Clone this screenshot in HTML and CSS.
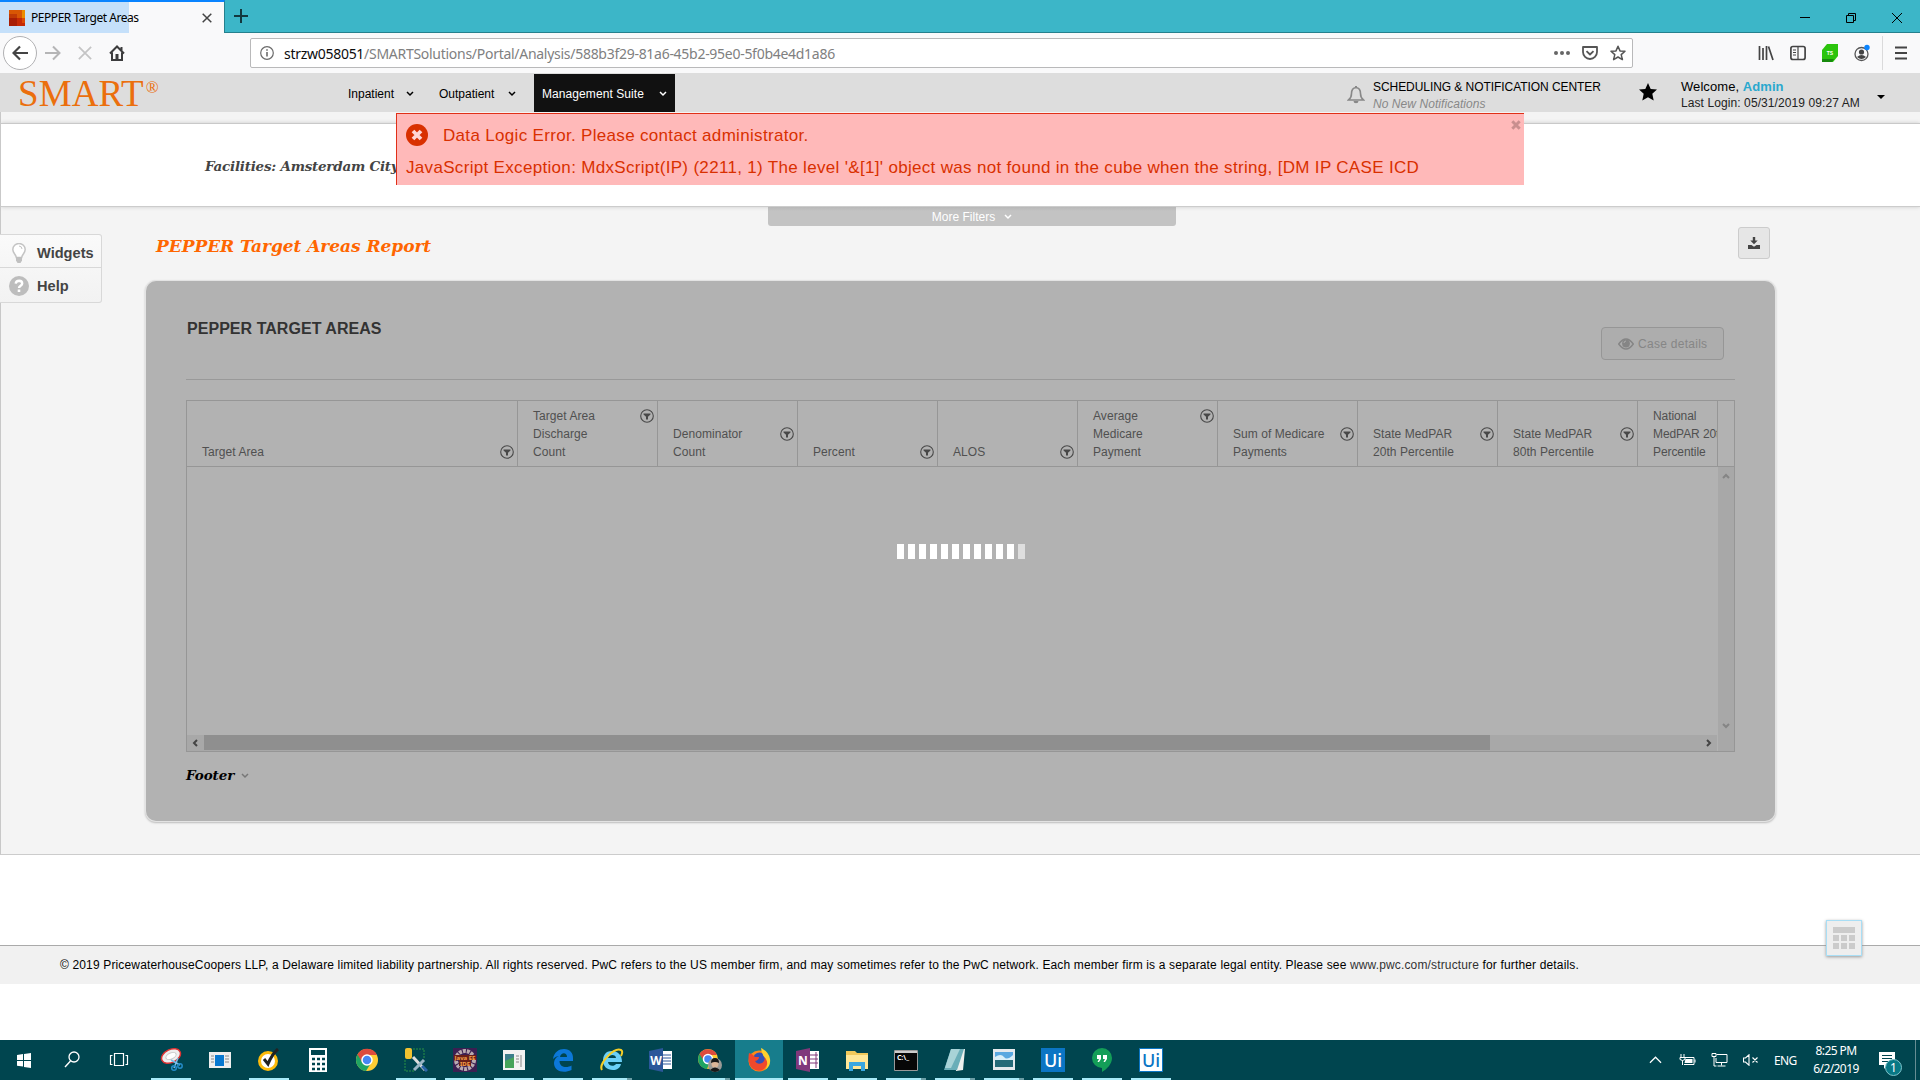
FILE: index.html
```html
<!DOCTYPE html>
<html lang="en">
<head>
<meta charset="utf-8">
<title>PEPPER Target Areas</title>
<link rel="stylesheet" href="styles.css">
</head>
<body>
<svg class="defs" width="0" height="0">
  <symbol id="chev" viewBox="0 0 8 6"><path d="M1 1l3 3 3-3" fill="none" stroke="currentColor" stroke-width="1.5"/></symbol>
  <symbol id="filter" viewBox="0 0 14 14"><circle cx="7" cy="7" r="6.3" fill="none" stroke="currentColor" stroke-width="1.1"/><path d="M3.500 4.500h7v1L8 7.800V10.500H6V7.800L3.500 5.500z" fill="currentColor"/></symbol>
  <symbol id="arrow" viewBox="0 0 8 8"><path d="M1 6l3-3 3 3" fill="none" stroke="currentColor" stroke-width="2"/></symbol>
</svg>

<div class="tabbar">
  <div class="tab">
    <svg class="favicon" viewBox="0 0 16 16"><path fill="#d85604" d="M0 0h16v16H0z"/><path fill="#eb8c00" d="M13 0h3v8h-3z"/><path fill="#c03a05" d="M0 4h8v4H0z"/><path fill="#a81e05" d="M0 8h8v8H0z"/><path fill="#c52a05" d="M8 8h8v8H8z"/><path fill="#dc4a05" d="M13 8h3v5h-3z"/></svg>
    <span class="tab-title">PEPPER Target Areas</span>
    <svg class="tab-close" viewBox="0 0 10 10"><path d="M.7.700l8.600 8.600M9.300.700L.7 9.300" stroke="#444" stroke-width="1.500"/></svg>
  </div>
  <svg class="newtab" viewBox="0 0 14 14"><path d="M7 0v14M0 7h14" stroke="#13383e" stroke-width="2"/></svg>
  <div class="winctl">
    <svg viewBox="0 0 12 12"><path d="M1 5.500h10" stroke="#000"/></svg>
    <svg viewBox="0 0 12 12"><path d="M1.500 3.500h7v7h-7zM3.500 3V1.500h7v7H9" fill="none" stroke="#000"/></svg>
    <svg viewBox="0 0 12 12"><path d="M1 1l10 10M11 1L1 11" stroke="#000"/></svg>
  </div>
</div>

<div class="toolbar">
  <div class="back"><svg viewBox="0 0 16 16"><path d="M16 8H2M8 1.500L1.500 8 8 14.500" fill="none" stroke="#444" stroke-width="2.200"/></svg></div>
  <svg class="tb fwd" viewBox="0 0 16 16"><path d="M0 8h14M8 1.500L14.500 8 8 14.500" fill="none" stroke="#b5b5b6" stroke-width="2"/></svg>
  <svg class="tb stop" viewBox="0 0 16 16"><path d="M1 1l14 14M15 1L1 15" stroke="#c4c4c5" stroke-width="2"/></svg>
  <svg class="tb home" viewBox="0 0 16 16"><path d="M1 8.500L8 1.500l7 7M3 7.500V15h10V7.500M12.500 2v4" fill="none" stroke="#3c3c3d" stroke-width="2"/><path d="M6.500 9h3v6h-3z" fill="#3c3c3d"/></svg>
  <div class="urlbar">
    <svg class="info" viewBox="0 0 14 14"><circle cx="7" cy="7" r="6.300" fill="none" stroke="#6b6b6b" stroke-width="1.200"/><path d="M6.200 6h1.600v4.500H6.200zM6.200 3.200h1.600v1.600H6.200z" fill="#6b6b6b"/></svg>
    <span class="url"><b>strzw058051</b>/SMARTSolutions/Portal/Analysis/588b3f29-81a6-45b2-95e0-5f0b4e4d1a86</span>
    <svg class="dots" viewBox="0 0 16 16"><g fill="#666"><circle cx="2" cy="8" r="2"/><circle cx="8" cy="8" r="2"/><circle cx="14" cy="8" r="2"/></g></svg>
    <svg class="pocket" viewBox="0 0 16 16"><path d="M1 2h14v5a7 7 0 0 1-14 0zM4.500 6.200L8 9.500l3.500-3.300" fill="none" stroke="#555" stroke-width="1.800" stroke-linejoin="round"/></svg>
    <svg class="bookmark" viewBox="0 0 16 16"><path d="M8 1.200l2 4.700 5 .4-3.800 3.300 1.200 5L8 12l-4.400 2.600 1.200-5L1 6.300l5-.4z" fill="none" stroke="#555" stroke-width="1.500" stroke-linejoin="round"/></svg>
  </div>
  <svg class="tb lib" viewBox="0 0 16 16"><path d="M1.500 1v14M5 3v12M8.500 1v14M10.500 1.500L15 15" stroke="#444" stroke-width="1.700"/></svg>
  <svg class="tb side" viewBox="0 0 16 16"><rect x=".9" y="1.500" width="14.200" height="13" rx="2" fill="none" stroke="#444" stroke-width="1.700"/><path d="M8 2v12M3 5h3M3 7.500h3M3 10h3" stroke="#444" stroke-width="1.200"/></svg>
  <svg class="tb ts" viewBox="0 0 16 18"><path d="M5 0h11v12l-5 6H0V6z" fill="#2bc40c"/><path d="M0 15h12l-2 3H0z" fill="#178a0d"/><text x="8" y="11" text-anchor="middle" class="ts-text">TS</text></svg>
  <svg class="tb acct" viewBox="0 0 16 18"><circle cx="7.500" cy="10" r="6.500" fill="none" stroke="#555" stroke-width="1.300"/><circle cx="7.500" cy="8" r="2.600" fill="#444"/><path d="M3 13q4.500-4 9 0-4.500 4-9 0z" fill="#444"/><circle cx="13" cy="3.500" r="2.700" fill="#0a84ff"/></svg>
  <i class="tb-sep"></i>
  <svg class="burger" viewBox="0 0 12 14"><path d="M0 1.500h12M0 7h12M0 12.500h12" stroke="#444" stroke-width="2"/></svg>
</div>

<header class="app-header">
  <div class="logo">SMART<sup>®</sup></div>
  <nav class="menu">
    <a><span>Inpatient</span><svg><use href="#chev"/></svg></a>
    <a><span>Outpatient</span><svg><use href="#chev"/></svg></a>
    <a class="on"><span>Management Suite</span><svg><use href="#chev"/></svg></a>
  </nav>
  <svg class="bell" viewBox="0 0 18 18"><path d="M9 1.500c-3.500.5-4.500 3-4.500 6 0 3-1 5-3 6.500h15c-2-1.500-3-3.500-3-6.500 0-3-1-5.500-4.500-6z" fill="none" stroke="#888" stroke-width="1.600"/><path d="M6.500 15h5a2.500 2.200 0 0 1-5 0zM8 0h2v2H8z" fill="#888"/></svg>
  <div class="notif"><div class="notif-t">SCHEDULING &amp; NOTIFICATION CENTER</div><div class="notif-s">No New Notifications</div></div>
  <svg class="star" viewBox="0 0 18 18"><path d="M9 0l2.700 5.900 6.300.6-4.700 4.300L14.700 17.500 9 14.200l-5.700 3.300 1.400-6.700L0 6.500l6.300-.6z" fill="#000"/></svg>
  <div class="user"><div class="welcome">Welcome, <b>Admin</b></div><div class="login">Last Login: 05/31/2019 09:27 AM</div></div>
  <i class="caret"></i>
</header>

<main class="page">
  <section class="filters">
    <span class="facilities">Facilities: Amsterdam City</span>
  </section>
  <div class="more"><span>More Filters</span><svg><use href="#chev"/></svg></div>
  <div class="titlebar">
    <h1>PEPPER Target Areas Report</h1>
    <div class="download"><svg viewBox="0 0 12 12"><path d="M4.800 0h2.400v3.500h2.500L6 7.200 2.300 3.500h2.500zM0 8h3.500L6 9.800 8.500 8H12v4H0z" fill="#444"/></svg></div>
  </div>
  <section class="panel">
    <div class="panel-head">
      <h2>PEPPER TARGET AREAS</h2>
      <div class="details"><svg viewBox="0 0 16 12"><path d="M.7 6Q8-4 15.300 6 8 16 .7 6z" fill="none" stroke="#858585" stroke-width="1.400"/><circle cx="8" cy="5.500" r="3.900" fill="#858585"/><path d="M6 5q0-1.800 2-2" stroke="#b0b0b0" fill="none" stroke-width=".9"/></svg><span>Case details</span></div>
    </div>
    <div class="grid">
      <div class="thead">
        <div class="th wide"><span>Target Area</span><svg><use href="#filter"/></svg></div>
        <div class="th"><span>Target Area<br>Discharge<br>Count</span><svg><use href="#filter"/></svg></div>
        <div class="th"><span>Denominator<br>Count</span><svg><use href="#filter"/></svg></div>
        <div class="th"><span>Percent</span><svg><use href="#filter"/></svg></div>
        <div class="th"><span>ALOS</span><svg><use href="#filter"/></svg></div>
        <div class="th"><span>Average<br>Medicare<br>Payment</span><svg><use href="#filter"/></svg></div>
        <div class="th"><span>Sum of Medicare<br>Payments</span><svg><use href="#filter"/></svg></div>
        <div class="th"><span>State MedPAR<br>20th Percentile</span><svg><use href="#filter"/></svg></div>
        <div class="th"><span>State MedPAR<br>80th Percentile</span><svg><use href="#filter"/></svg></div>
        <div class="th cut"><span>National<br>MedPAR 20th<br>Percentile</span></div>
      </div>
      <div class="tbody">
        <div class="rows">
          <div class="loader"><i></i><i></i><i></i><i></i><i></i><i></i><i></i><i></i><i></i><i></i><i></i><i></i></div>
          <div class="hscroll"><svg class="left"><use href="#arrow"/></svg><div class="track"><div class="thumb"></div></div><svg class="right"><use href="#arrow"/></svg></div>
        </div>
        <div class="vscroll"><svg><use href="#arrow"/></svg><svg class="down"><use href="#arrow"/></svg></div>
      </div>
    </div>
    <div class="footnote"><span>Footer</span><svg><use href="#chev"/></svg></div>
  </section>

  <aside class="sidetabs">
    <div><svg viewBox="0 0 20 20"><path d="M7.300 14.500C7 11.500 3.800 10 3.800 6.500a6.200 6 0 0 1 12.400 0c0 3.500-3.200 5-3.500 8z" fill="#fff" stroke="#c4c4c4" stroke-width="1.500"/><path d="M7 14h6v3.500L11.500 20h-3L7 17.500z" fill="#c0c0c0"/><path d="M10 3q3 .3 3 3" fill="none" stroke="#c4c4c4"/></svg><span>Widgets</span></div>
    <div><svg viewBox="0 0 20 20"><circle cx="10" cy="10" r="10" fill="#bdbdbd"/><path d="M6.700 7.600Q7 4.800 10.200 4.800q3 .2 3 2.700c0 2.300-3.200 2-3.200 4.500" fill="none" stroke="#fff" stroke-width="2.400"/><path d="M8.700 13.500h2.600V16H8.700z" fill="#fff"/></svg><span>Help</span></div>
  </aside>
  <div class="error">
    <svg class="err-icon" viewBox="0 0 22 22"><circle cx="11" cy="11" r="11" fill="#d93000"/><path d="M7 7l8 8M15 7l-8 8" stroke="#ffd6d4" stroke-width="3.800"/></svg>
    <span class="err-title">Data Logic Error. Please contact administrator.</span>
    <svg class="err-close" viewBox="0 0 10 10"><path d="M1.300 1.300l7.400 7.400M8.700 1.300L1.300 8.700" stroke="#c98f8f" stroke-width="3"/></svg>
    <p>JavaScript Exception: MdxScript(IP) (2211, 1) The level '&amp;[1]' object was not found in the cube when the string, [DM IP CASE ICD</p>
  </div>
</main>

<footer class="legal">
  <span>© 2019 PricewaterhouseCoopers LLP, a Delaware limited liability partnership. All rights reserved. PwC refers to the US member firm, and may sometimes refer to the PwC network. Each member firm is a separate legal entity. Please see <a>www.pwc.com/structure</a> for further details.</span>
  <div class="calc"><svg viewBox="0 0 22 22"><path fill="#cbcbcb" d="M0 0h22v6H0zM0 8h6v6H0zM8 8h6v6H8zM16 8h6v6h-6zM0 16h6v6H0zM8 16h6v6H8zM16 16h6v6h-6z"/></svg></div>
</footer>

<div class="taskbar">
  <div class="apps">
    <div class="app sys"><svg viewBox="0 0 20 20"><path fill="#fff" d="M3 5l6-1v6H3zM10 3.900L17 3v7h-7zM3 11h6v5.600l-6-.8zM10 11h7v7l-7-1z"/></svg></div>
    <div class="app sys"><svg viewBox="0 0 20 20"><circle cx="12" cy="7" r="5" fill="none" stroke="#fff" stroke-width="1.300"/><path d="M8.500 11L3 17" stroke="#fff" stroke-width="1.400"/></svg></div>
    <div class="app sys"><svg viewBox="0 0 20 20"><path d="M5.500 3.500h9v12h-9zM3.500 5.500h-2v9h2M16.500 5.500h2v9h-2" fill="none" stroke="#fff" stroke-width="1.200"/></svg></div>
    <div class="app run"><svg viewBox="0 0 24 24"><ellipse cx="12" cy="8" rx="10" ry="6.500" transform="rotate(-25 12 8)" fill="#eee" stroke="#d33" stroke-width="1.500"/><ellipse cx="12" cy="8" rx="5.500" ry="3" transform="rotate(-25 12 8)" fill="#fff" stroke="#c9c9c9"/><path d="M12 12l9 5M19 10l-4 10" stroke="#79bce8" stroke-width="1.500"/><circle cx="15" cy="20" r="2.300" fill="none" stroke="#238cc8" stroke-width="1.500"/><circle cx="21" cy="18" r="2.200" fill="none" stroke="#238cc8" stroke-width="1.500"/></svg></div>
    <div class="app"><svg viewBox="0 0 24 24"><path fill="#eee" d="M1 4h22v16H1z"/><path fill="#0878d0" d="M7 7h9v11H7z"/><path d="M3 8h3M3 11h3M3 14h3M17 8h4M17 11h4M17 14h4" stroke="#888"/></svg></div>
    <div class="app run"><svg viewBox="0 0 24 24"><circle cx="11" cy="13" r="8.500" fill="#fff" stroke="#fdbb0b" stroke-width="3"/><path d="M7 11l4 5Q15 6 21 1" fill="none" stroke="#222" stroke-width="3"/></svg></div>
    <div class="app"><svg viewBox="0 0 24 24"><path fill="#fff" d="M3 0h18v24H3z"/><path fill="#00454f" d="M5 2h14v5H5z"/><path d="M6 11h13M6 16h13M6 21h13" stroke="#00454f" stroke-width="2.500" stroke-dasharray="3 2"/></svg></div>
    <div class="app"><svg viewBox="0 0 24 24"><circle cx="12" cy="12" r="11" fill="#fc3"/><path d="M12 12L2.500 6.500A11 11 0 0 0 11 23l5-8z" fill="#1fa463"/><path d="M2.500 6.500A11 11 0 0 1 22 7H12L7 14z" fill="#dd4b3e"/><circle cx="12" cy="12" r="5" fill="#4687f4" stroke="#fff" stroke-width="1.500"/></svg></div>
    <div class="app run"><svg viewBox="0 0 24 24"><path d="M9 1h11v10M1 12v11h10" fill="none" stroke="#299344" stroke-dasharray="2 1"/><rect x="1" y="0" width="7" height="11" rx="2" fill="#f2c230"/><path d="M9 9l12 13" stroke="#ddd" stroke-width="3"/><path d="M10 22l10-10" stroke="#9bb6c6" stroke-width="3"/><path d="M18 18l5 5" stroke="#2a66a8" stroke-width="3"/></svg></div>
    <div class="app run"><svg viewBox="0 0 24 24"><path fill="#3b1f52" d="M0 0h24v24H0z"/><circle cx="12" cy="12" r="9" fill="none" stroke="#b9aab0" stroke-width="4" stroke-dasharray="3 1"/><path fill="#6b2018" d="M1 7h22v5H1zM6 12h12v6H6z"/><text x="12" y="11.500" class="jee">Java EE</text><text x="12" y="17.500" class="jee">IDE</text></svg></div>
    <div class="app run"><svg viewBox="0 0 24 24"><path fill="#f2f2f2" d="M1 2h22v20H1z"/><path fill="#3d7f8c" d="M3 6h9v14H3z"/><path fill="#46a35a" d="M3 13l9-4v11H3z"/><path d="M14 8h3M14 11h3M14 14h3M19 7v12" stroke="#888"/></svg></div>
    <div class="app run"><svg viewBox="0 0 24 24"><path d="M2 11C3 4 8 1 13 1c6 0 9 4 9 9v3H8.500c0 7 8 7 12 4.500v4.500C12 26 3 23 3 15c0-3 2-6 5-7-2 0-4 1-6 3zm7-2h7c0-5-6-5-7 0z" fill="#0c78d8"/></svg></div>
    <div class="app run multi"><svg viewBox="0 0 24 24"><path d="M12 3C5 3 3 8 3 13s4 9 10 9c4 0 7-2 8-6h-5c-2 3-8 2-8-2h14C22 7 18 3 12 3zM8 10c1-4 8-4 8 0z" fill="#6bd0f7"/><path d="M2 22C-2 16 14-1 21 2c2 1 1 4 0 6" fill="none" stroke="#f5ce27" stroke-width="2"/></svg></div>
    <div class="app"><svg viewBox="0 0 24 24"><path fill="#fff" d="M12 3h11v18H12z"/><path d="M14 7h8M14 10h8M14 13h8M14 16h8" stroke="#2b579a"/><path fill="#2b579a" d="M0 3l14-3v24L0 21z"/><text x="7" y="16.500" class="glyph">W</text></svg></div>
    <div class="app run multi"><svg viewBox="0 0 24 24"><circle cx="10" cy="11" r="10" fill="#fc3"/><path d="M1.500 6A10 10 0 0 0 9 21l3-8z" fill="#1fa463"/><path d="M1.500 6A10 10 0 0 1 19 7h-9l-4 6z" fill="#dd4b3e"/><circle cx="10" cy="11" r="4.500" fill="#4687f4" stroke="#fff" stroke-width="1.500"/><circle cx="17" cy="17" r="7" fill="#9a9a96"/><circle cx="17" cy="16" r="3.500" fill="#dcb698"/><path d="M13 15q0-5 4-5t4 5q-4-2-8 0zM12 22q5-5 10 0-5 4-10 0z" fill="#181818"/></svg></div>
    <div class="app run active"><svg viewBox="0 0 24 24"><circle cx="12" cy="13" r="10.500" fill="#ff8a16"/><circle cx="12.500" cy="11" r="6.500" fill="#3450b5"/><path d="M2 5q4 1 6 4h4q0 3-4 4 2 4 7 2 4-2 2-7 6 6 1 12-5 5-12 1-6-5-4-16z" fill="#f0492c"/><path d="M14 0q8 4 9 11t-5 11q4-6 1-11-5-5-5-11z" fill="#ffcf2e"/></svg></div>
    <div class="app run"><svg viewBox="0 0 24 24"><path fill="#fff" d="M12 3h11v18H12z"/><path d="M14 7h8M14 11h8M14 15h8M20 4v16" stroke="#80397b"/><path fill="#80397b" d="M0 3l14-3v24L0 21z"/><text x="7" y="16.500" class="glyph">N</text></svg></div>
    <div class="app run"><svg viewBox="0 0 24 24"><path fill="#f1c95b" d="M1 3h9l2 2h11v16H1z"/><path fill="#ffe797" d="M1 7h22v14H1z"/><path fill="#39a7e0" d="M4 14h16v9h-4v-5H8v5H4z"/></svg></div>
    <div class="app run multi"><svg viewBox="0 0 24 24"><path fill="#070707" stroke="#999" d="M.5 2.500h23v20H.5z"/><path fill="#ccc" d="M1 3h22v2H1z"/><text x="9" y="12" class="cmd">C:\_</text></svg></div>
    <div class="app run multi"><svg viewBox="0 0 24 24"><path fill="#edf0ee" d="M10 1h12l-2 21-7 1z"/><path fill="#6aaeb8" d="M8 1h13l-7 21H1z"/><path fill="#a8d3d7" d="M8 1h9L8 20H2z"/></svg></div>
    <div class="app run multi"><svg viewBox="0 0 24 24"><path fill="#e4e9ed" d="M1 1h22v21H1z"/><path fill="#5aa8e0" d="M3 4h18v7H3z"/><path fill="#d9eff8" d="M3 9q6-4 9 0t9-2v5H3z"/><path fill="#256a78" d="M3 12h18v7H3z"/></svg></div>
    <div class="app run"><svg viewBox="0 0 24 24"><path fill="#0b75c4" d="M0 0h24v24H0z"/><text x="12" y="18.500" class="ui">Ui</text></svg></div>
    <div class="app run"><svg viewBox="0 0 24 24"><path d="M12 0a10 10 0 0 1 10 10c0 6-5 11-10 14v-4A10 10 0 0 1 12 0z" fill="#149e58"/><path fill="#fff" d="M7 7h4v4l-2 3H7.500L9 11H7zM13 7h4v4l-2 3h-1.500l1.500-3h-2z"/></svg></div>
    <div class="app run"><svg viewBox="0 0 24 24"><path fill="#fff" stroke="#0b75c4" d="M.5.500h23v23H.5z"/><text x="12" y="18.500" class="ui inv">Ui</text></svg></div>
  </div>
  <div class="tray">
    <svg class="t-up" viewBox="0 0 14 8"><path d="M1 7l6-6 6 6" fill="none" stroke="#fff" stroke-width="1.300"/></svg>
    <svg class="t-bat" viewBox="0 0 16 12"><path d="M5.500 3.500h9v7h-10M15.500 5.500v3M1.500 0v3M4.500 0v3M.5 3.500h5v2q-2.500 2-5 0zM3 6.500V11" fill="none" stroke="#fff"/><path fill="#fff" d="M6 5h7v4H5z"/></svg>
    <svg class="t-net" viewBox="0 0 16 14"><path d="M5 1.500h10.500v8H4.500V5M10 9.500v3M6 13h8M.5.500h4v3h-4zM2.500 4v9H5" fill="none" stroke="#fff"/></svg>
    <svg class="t-vol" viewBox="0 0 16 12"><path d="M.5 4h2L6 .8v10.400L2.500 8h-2zM9.500 3.500l5 5M14.500 3.500l-5 5" fill="none" stroke="#fff" stroke-width="1.100"/></svg>
    <span class="lang">ENG</span>
    <div class="clock"><div>8:25 PM</div><div>6/2/2019</div></div>
    <div class="action"><svg viewBox="0 0 18 17"><path fill="#fff" d="M1 0h16v13H9l-3 4v-4H1z"/><path d="M4 3.500h10M4 6.500h10M4 9.500h7" stroke="#00454f"/></svg><span>1</span></div>
    <i class="peek"></i>
  </div>
</div>
</body>
</html>
```
FILE: styles.css
```css
* { box-sizing: border-box; }
body { margin: 0; width: 1920px; height: 1080px; overflow: hidden; background: #fff; font-family: "Liberation Sans", Arial, sans-serif; font-size: 12px; color: #000; display: flex; flex-direction: column; position: relative; }
svg { display: block; flex: none; }
.defs { position: absolute; }

.tabbar { height: 33px; flex: none; background: #3cb6c8; display: flex; border-bottom: 1px solid #25808d; }
.tab { width: 225px; height: 33px; border-top: 2px solid #0a84ff; border-right: 1px solid #25808d; background: linear-gradient(90deg, #c5e0fa 129px, #f9f9fa 129px); display: flex; align-items: center; padding: 0 12px 0 9px; font-family: "Noto Sans", sans-serif; flex: none; }
.favicon { width: 16px; height: 16px; }
.tab-title { margin-left: 6px; flex: 1; white-space: nowrap; letter-spacing: -0.45px; }
.tab-close { width: 10px; height: 10px; }
.newtab { width: 14px; height: 14px; margin: 9px 0 0 9px; }
.winctl { margin-left: auto; display: flex; gap: 34px; padding: 12px 17px 0 0; }
.winctl svg { width: 12px; height: 12px; }

.toolbar { height: 40px; flex: none; background: #f9f9fa; display: flex; align-items: center; padding-left: 3px; }
.back { width: 34px; height: 34px; border: 1px solid #b1b1b3; border-radius: 50%; background: #fff; display: flex; align-items: center; justify-content: center; }
.back svg, .tb { width: 16px; height: 16px; }
.fwd { margin-left: 8px; }
.stop { width: 14px; height: 14px; margin-left: 17px; }
.home { margin-left: 17px; }
.urlbar { width: 1383px; height: 30px; margin-left: 125px; background: #fff; border: 1px solid #b9b9ba; border-radius: 2px; display: flex; align-items: center; padding: 0 6px 0 9px; font-family: "Noto Sans", sans-serif; font-size: 14px; color: #808080; }
.info { width: 14px; height: 14px; }
.url { margin-left: 10px; flex: 1; white-space: nowrap; letter-spacing: -0.28px; padding-top: 1px; }
.url b { font-weight: 400; color: #0c0c0d; }
.dots { width: 16px; height: 16px; }
.pocket, .bookmark { width: 16px; height: 16px; margin-left: 12px; }
.lib { margin-left: 125px; }
.side { margin-left: 16px; }
.ts { margin-left: 16px; height: 18px; }
.ts-text { font: 700 5px "Liberation Sans", sans-serif; fill: #fff; }
.acct { margin-left: 16px; height: 18px; }
.tb-sep { width: 1px; height: 34px; background: #dadadb; margin-left: 12px; }
.burger { width: 12px; height: 14px; margin-left: 12px; }

.app-header { height: 39px; flex: none; background: #ddd; display: flex; align-items: center; }
.logo { width: 347px; padding: 2px 0 0 18px; font: 37px/38px "Liberation Serif", serif; color: #eb6f0d; white-space: nowrap; letter-spacing: 0.1px; }
.logo sup { font-size: 17px; line-height: 0; vertical-align: 13px; margin-left: 2px; }
.menu { display: flex; align-self: stretch; padding-top: 1px; margin-left: -12px; }
.menu a { display: flex; align-items: center; justify-content: space-between; padding: 2px 13px 0 13px; white-space: nowrap; width: 92px; }
.menu a:nth-child(2) { width: 97px; margin-right: 10px; padding: 2px 8px 0 12px; }
.menu svg { width: 8px; height: 6px; }
.menu a.on { width: 141px; padding: 2px 8px 0; background: #111; color: #fff; letter-spacing: .08px; }
.bell { width: 18px; height: 18px; margin: 4px 0 0 672px; }
.notif { margin-left: 8px; width: 250px; white-space: nowrap; margin-top: 6px; }
.notif-t, .notif-s { line-height: 17px; }
.notif-t { letter-spacing: -0.06px; }
.notif-s { color: #888; font-style: italic; letter-spacing: .06px; }
.star { width: 18px; height: 18px; margin: -2px 0 0 16px; }
.user { margin-left: 24px; width: 197px; white-space: nowrap; margin-top: 4px; }
.welcome { font-size: 13px; line-height: 17px; letter-spacing: .07px; }
.welcome b { color: #2aa8ce; }
.login { line-height: 17px; color: #222; letter-spacing: .09px; }
.caret { border: 4px solid transparent; border-top-color: #000; border-bottom: 0; margin: 9px 0 0 -1px; }

.page { height: 743px; flex: none; position: relative; background: #f4f4f4; border-bottom: 1px solid #ccc; border-left: 1px solid #c8c8c8; padding-top: 11px; }
.filters { height: 84px; background: #fff; border-top: 1px solid #c9c9c9; border-bottom: 1px solid #ccc; box-shadow: 0 0 4px #ccc; padding: 32px 0 0 204px; }
.facilities, .footnote, h1 { font-family: "DejaVu Serif", Georgia, serif; font-weight: 700; font-style: italic; white-space: nowrap; }
.facilities { font-size: 13.500px; line-height: 20px; color: #444; letter-spacing: -0.25px; display: block; }
.more { width: 408px; height: 19px; margin-left: 767px; position: relative; background: linear-gradient(#b8b8b8, #c3c3c3 4px); border-radius: 0 0 3px 3px; color: #fff; display: flex; justify-content: center; align-items: center; gap: 9px; }
.more svg { width: 8px; height: 6px; }
.titlebar { height: 55px; padding: 1px 150px 0 155px; display: flex; justify-content: space-between; align-items: flex-start; }
h1 { margin: 9px 0 0; font-size: 17px; line-height: 20px; color: #f60; letter-spacing: -0.04px; }
.download { width: 32px; height: 32px; border: 1px solid #ccc; border-radius: 3px; background: #e6e6e6; display: flex; align-items: center; justify-content: center; }
.download svg { width: 12px; height: 12px; }

.panel { width: 1629px; height: 540px; margin-left: 145px; background: #b2b2b2; border-radius: 10px; box-shadow: 0 0 0 1px #e3e3e3, 0 1px 2px 1px #bbb; padding: 0 40px 0 40px; }
.panel-head { height: 99px; border-bottom: 1px solid #999; display: flex; justify-content: space-between; }
h2 { margin: 38px 0 0 1px; font-size: 16px; line-height: 20px; color: #333; letter-spacing: .04px; }
.details { width: 123px; height: 33px; margin: 46px 11px 0 0; border: 1px solid #969696; border-radius: 4px; background: #adadad; color: #868686; display: flex; align-items: center; padding-left: 16px; gap: 4px; white-space: nowrap; letter-spacing: .28px; }
.details svg { width: 16px; height: 12px; }
.grid { height: 352px; margin-top: 20px; border: 1px solid #969696; display: flex; flex-direction: column; }
.thead { height: 66px; border-bottom: 1px solid #969696; display: flex; flex: none; }
.th { width: 140px; flex: none; border-right: 1px solid #969696; display: flex; justify-content: space-between; align-items: flex-end; padding: 0 3px 5px 15px; line-height: 18px; color: #505050; overflow: hidden; white-space: nowrap; letter-spacing: .06px; }
.th span { align-self: flex-end; }
.th svg { width: 14px; height: 14px; color: #484848; align-self: flex-end; margin-bottom: 2px; }
.th:nth-child(2) svg, .th:nth-child(6) svg { margin-bottom: 38px; }
.th:nth-child(3) svg, .th:nth-child(7) svg, .th:nth-child(8) svg, .th:nth-child(9) svg { margin-bottom: 20px; }
.th.wide { width: 331px; }
.th.cut { width: 80px; padding-right: 0; letter-spacing: -0.08px; }
.tbody { display: flex; flex: 1; }
.rows { width: 1531px; flex: none; display: flex; flex-direction: column; justify-content: space-between; }
.loader { display: flex; gap: 4px; padding: 77px 0 0 710px; }
.loader i { width: 7px; height: 15px; background: #fff; }
.loader i:last-child { background: #dedede; }
.hscroll { height: 16px; background: #a8a8a8; display: flex; align-items: center; margin-right: 1px; }
.hscroll svg, .vscroll svg { width: 8px; height: 8px; }
.left { transform: rotate(-90deg); margin: 0 5px 0 4px; color: #444; }
.right { transform: rotate(90deg); margin: 0 4px; color: #444; }
.track { flex: 1; height: 15px; align-self: flex-start; }
.thumb { width: 1286px; height: 15px; background: #8f8f8f; }
.vscroll { flex: 1; background: #a8a8a8; color: #858585; display: flex; flex-direction: column; align-items: center; justify-content: space-between; padding: 5px 1px 21px 0; }
.down { transform: rotate(180deg); }
.footnote { display: flex; align-items: center; gap: 7px; height: 20px; margin-top: 13px; font-size: 13.500px; letter-spacing: -0.1px; }
.footnote svg { width: 8px; height: 6px; color: #777; margin-top: 2px; }

.sidetabs { position: absolute; left: -1px; top: 122px; width: 102px; border: 1px solid #d8d8d8; border-left: 0; border-radius: 0 3px 3px 0; background: linear-gradient(#fafafa, #f2f2f2); }
.sidetabs div { height: 34px; display: flex; align-items: center; padding: 1px 0 0 9px; gap: 8px; font-size: 14.600px; font-weight: 700; color: #444; }
.sidetabs div:first-child { height: 33px; padding-top: 3px; border-bottom: 1px solid #d8d8d8; }
.sidetabs svg { width: 20px; height: 20px; }
.error { position: absolute; left: 395px; top: 1px; width: 1128px; height: 72px; background: #ffb9b9; border: 1px solid #e03018; border-width: 1px 0 0 1px; color: #d93000; font-size: 17px; display: grid; grid-template-columns: 37px 1fr 10px; grid-template-rows: 32px 32px; align-items: start; padding: 0 3px 0 9px; letter-spacing: .32px; white-space: nowrap; }
.err-icon { width: 22px; height: 22px; margin-top: 10px; }
.err-title { line-height: 20px; margin-top: 12px; }
.err-close { width: 10px; height: 10px; margin-top: 6px; }
.error p { grid-column: 1 / -1; margin: 12px 0 0; line-height: 20px; }

.legal { height: 39px; flex: none; margin-top: 90px; border-top: 1px solid #aaa; background: #f1f1f1; padding-left: 60px; position: relative; line-height: 39px; white-space: nowrap; letter-spacing: .148px; }
.legal a { color: #333; }
.calc { position: absolute; left: 1826px; top: -26px; width: 36px; height: 36px; background: #eee; border: 1px solid #a9def5; box-shadow: 0 1px 3px #999; display: flex; align-items: center; justify-content: center; }
.calc svg { width: 22px; height: 22px; }

.taskbar { height: 40px; flex: none; margin-top: auto; background: #00454f; display: flex; justify-content: space-between; color: #fff; font-family: "Noto Sans", sans-serif; }
.apps { display: flex; gap: 9px; align-items: stretch; }
.app { width: 40px; display: flex; align-items: center; justify-content: center; border-bottom: 2px solid transparent; padding-top: 1px; }
.app svg { width: 24px; height: 24px; }
.app.sys { width: 30px; }
.app.sys svg { width: 20px; height: 20px; }
.app.sys:first-child { width: 48px; }
.app.sys:nth-child(3) { width: 46px; }
.app.run { border-bottom-color: #a8eaf8; }
.app.multi { border-image: linear-gradient(90deg, #a8eaf8 83%, #6b9ea6 83%) 2; border-width: 0 0 2px; }
.app.active { width: 48px; margin: 0 -4px; background: #177d8c; }
.glyph, .ui, .jee, .cmd { font-family: "Noto Sans", sans-serif; font-weight: 700; font-size: 12px; text-anchor: middle; fill: #fff; }
.ui { font-size: 18px; font-weight: 500; }
.ui.inv { fill: #0b75c4; }
.jee { font-size: 6px; fill: #f5a04a; }
.cmd { font-size: 7px; }
.tray { display: flex; align-items: center; }
.t-up { width: 13px; height: 8px; margin-right: 17px; }
.t-bat { width: 17px; height: 12px; margin-right: 15px; }
.t-net { width: 17px; height: 14px; margin-right: 15px; }
.t-vol { width: 16px; height: 12px; margin-right: 15px; }
.lang { width: 24px; margin-right: 14px; letter-spacing: -0.6px; }
.clock { width: 48px; text-align: center; line-height: 18px; letter-spacing: -0.6px; white-space: nowrap; }
.action { width: 40px; height: 40px; margin-left: 18px; position: relative; padding-top: 12px; }
.action svg { width: 18px; height: 17px; }
.action span { position: absolute; left: 7px; top: 19px; width: 17px; height: 17px; border: 1px solid #7dc3cb; border-radius: 50%; background: #087885; text-align: center; line-height: 15px; font-size: 12px; }
.peek { width: 1px; height: 40px; background: #668d93; margin-right: 4px; margin-left: -3px; }
```
